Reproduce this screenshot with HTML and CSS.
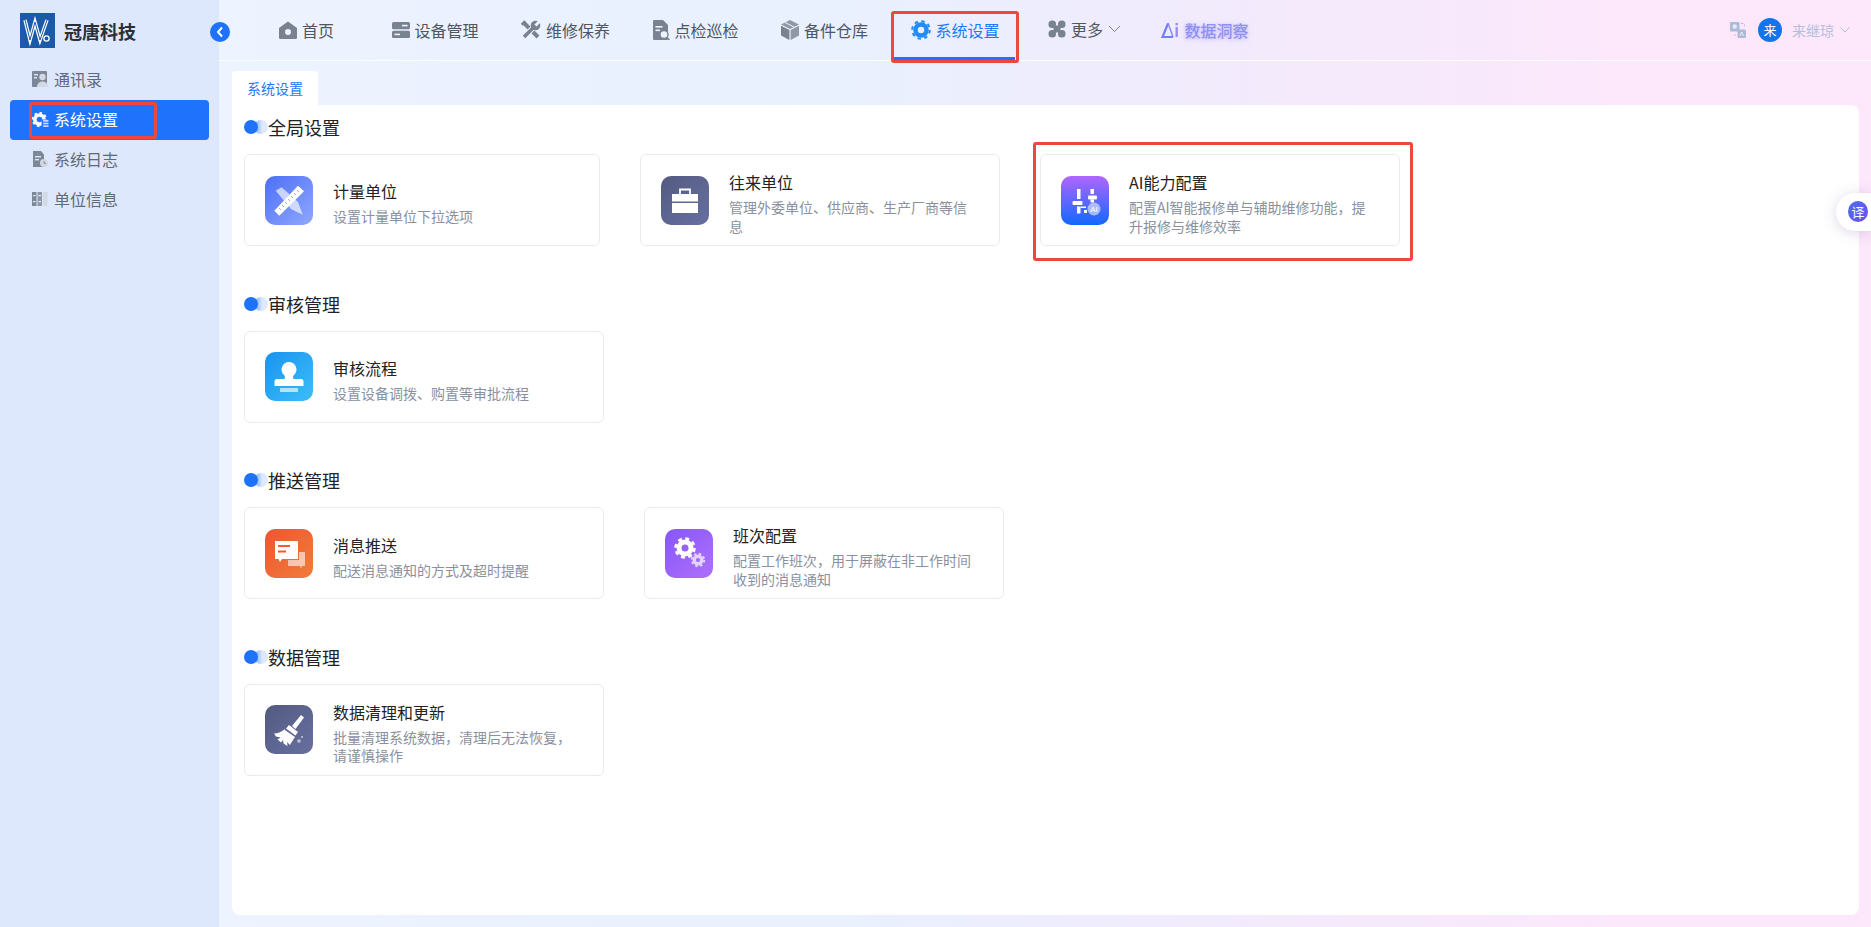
FILE: index.html
```html
<!DOCTYPE html>
<html>
<head>
    <title>系统设置</title>
    <link rel="stylesheet" href="styles.css">
</head>
<body>
    <aside class="sidebar">
        <div class="brand">
            <svg class="brand-logo" width="35" height="35" viewBox="0 0 35 35">
                <rect width="35" height="35" fill="#1b5aa8"/>
                <polyline points="5,7 10,27 15,9 20,27 27,7" fill="none" stroke="#fff" stroke-width="3.4"/>
                <polyline points="5,7 10,27 15,9 20,27 27,7" fill="none" stroke="#1b5aa8" stroke-width="1"/>
                <circle cx="26.5" cy="25.5" r="2.6" fill="none" stroke="#fff" stroke-width="1.3"/>
            </svg>
            <span class="brand-name">冠唐科技</span>
        </div>
        <button class="collapse-btn">
            <svg width="10" height="12" viewBox="0 0 10 12"><polyline points="7,1.5 3,6 7,10.5" fill="none" stroke="#fff" stroke-width="2"/></svg>
        </button>
        <a class="side-item">
            <svg width="16" height="16" viewBox="0 0 16 16">
                <rect x="0" y="0" width="15" height="16" rx="1" fill="#7c8797"/>
                <rect x="2" y="3" width="4" height="1.4" fill="#dfe8f8"/>
                <rect x="2" y="6" width="3" height="1.4" fill="#dfe8f8"/>
                <circle cx="10.5" cy="6" r="3.2" fill="#d3d9e3"/>
                <path d="M5 16c0-4 3-5.500 5.500-5.500S16 12 16 16z" fill="#d3d9e3"/>
            </svg>
            通讯录
        </a>
        <a class="side-item active">
            <svg width="17" height="17" viewBox="0 0 16 16">
                <circle cx="7" cy="8" r="4.300" fill="none" stroke="#fff" stroke-width="3.400"/>
                <circle cx="7" cy="8" r="6.400" fill="none" stroke="#fff" stroke-width="1.600" stroke-dasharray="2.400 2.600"/>
                <rect x="9" y="8" width="7" height="8" fill="#1f72fb"/>
                <rect x="10.500" y="8.500" width="5" height="1.500" fill="#cfe0ff"/>
                <rect x="10.500" y="11" width="5" height="1.500" fill="#cfe0ff"/>
                <rect x="10.500" y="13.500" width="5" height="1.500" fill="#cfe0ff"/>
            </svg>
            系统设置
            <span class="mark mark-side"></span>
        </a>
        <a class="side-item">
            <svg width="16" height="16" viewBox="0 0 16 16">
                <path d="M1 0h8l3 3.500V16H1z" fill="#7c8797"/>
                <rect x="3" y="5" width="6" height="1.400" fill="#dfe8f8"/>
                <rect x="3" y="8" width="4" height="1.400" fill="#dfe8f8"/>
                <circle cx="12" cy="12" r="4" fill="#d3d9e3"/>
                <path d="M12 10v2.300h2" fill="none" stroke="#7c8797" stroke-width=".9"/>
            </svg>
            系统日志
        </a>
        <a class="side-item">
            <svg width="16" height="16" viewBox="0 0 16 16">
                <rect x="0" y="1" width="4.500" height="14" fill="#7c8797"/>
                <rect x="5.500" y="1" width="4.500" height="14" fill="#8d97a6"/>
                <rect x="11" y="1" width="4.500" height="14" fill="#d3d9e3"/>
                <rect x="1" y="4" width="2.500" height="1.200" fill="#dfe8f8"/>
                <rect x="6.500" y="4" width="2.500" height="1.200" fill="#dfe8f8"/>
                <rect x="1" y="10" width="2.500" height="1.200" fill="#dfe8f8"/>
                <rect x="6.500" y="10" width="2.500" height="1.200" fill="#dfe8f8"/>
            </svg>
            单位信息
        </a>
    </aside>

    <div class="main">
        <header class="topbar">
            <nav class="nav">
                <a class="nav-item nav-home">
                    <svg width="18" height="18" viewBox="0 0 18 18"><path d="M9 .5 18 7v9.500a1.500 1.500 0 0 1-1.500 1.500h-15A1.500 1.500 0 0 1 0 16.500V7z" fill="#79838f"/><circle cx="9" cy="11" r="3" fill="#eef3fe"/></svg>
                    首页
                </a>
                <a class="nav-item">
                    <svg width="18" height="18" viewBox="0 0 18 18"><rect y="1" width="18" height="7.200" rx="1.500" fill="#79838f"/><rect y="9.800" width="18" height="7.200" rx="1.500" fill="#79838f"/><rect x="10" y="3.800" width="5.500" height="1.600" fill="#eef3fe"/><rect x="2.500" y="12.600" width="5.500" height="1.600" fill="#eef3fe"/></svg>
                    设备管理
                </a>
                <a class="nav-item">
                    <svg width="20" height="20" viewBox="0 0 20 20">
                        <path d="M3 3 17 17" stroke="#79838f" stroke-width="4"/>
                        <rect x="0" y="1.500" width="5" height="3" transform="rotate(-45 2.500 3)" fill="#79838f"/>
                        <path d="M3 17 13 7" stroke="#eef3fe" stroke-width="5.500"/>
                        <path d="M3 17 13 7" stroke="#79838f" stroke-width="3.600"/>
                        <circle cx="14.500" cy="5.500" r="4.800" fill="#79838f"/>
                        <path d="M14.500 5.500 19 1" stroke="#eef3fe" stroke-width="3"/>
                    </svg>
                    维修保养
                </a>
                <a class="nav-item">
                    <svg width="17" height="20" viewBox="0 0 17 20"><path d="M1 0h9l5 5v14a1 1 0 0 1-1 1H1a1 1 0 0 1-1-1V1a1 1 0 0 1 1-1z" fill="#79838f"/><rect x="2.500" y="6" width="7" height="1.600" fill="#eef3fe"/><rect x="2.500" y="9.500" width="4.500" height="1.600" fill="#eef3fe"/><circle cx="11" cy="14.500" r="4" fill="#eef3fe" stroke="#79838f" stroke-width="1.400"/><path d="m14 17.500 2.500 2.500" stroke="#79838f" stroke-width="1.500"/></svg>
                    点检巡检
                </a>
                <a class="nav-item">
                    <svg width="18" height="20" viewBox="0 0 18 20"><path d="M9 0 18 4.500 9 9 0 4.500z" fill="#8f98a3"/><path d="M0 5.800 8.400 10v10L0 15.500z" fill="#79838f"/><path d="M18 5.800 9.600 10v10l8.400-4.500z" fill="#8f98a3"/><path d="m4 2.500 9 4.500" stroke="#eef3fe" stroke-width="1"/></svg>
                    备件仓库
                </a>
                <a class="nav-item active">
                    <svg width="20" height="20" viewBox="0 0 20 20"><circle cx="10" cy="10" r="5.500" fill="none" stroke="#1f8df5" stroke-width="4.500"/><circle cx="10" cy="10" r="8.800" fill="none" stroke="#1f8df5" stroke-width="2" stroke-dasharray="3.500 3.410"/></svg>
                    系统设置
                    <span class="mark mark-nav"></span>
                </a>
                <a class="nav-item nav-more">
                    <svg class="nudge-up" width="18" height="18" viewBox="0 0 18 18" fill="#79838f"><rect x=".5" y=".5" width="7.500" height="7.500" rx="3.500"/><rect x="10" y=".5" width="7.500" height="7.500" rx="3.500"/><rect x=".5" y="10" width="7.500" height="7.500" rx="3.500"/><rect x="10" y="10" width="7.500" height="7.500" rx="3.500"/><rect x="5.500" y="5.500" width="7" height="7"/></svg>
                    <span class="nudge-up">更多</span>
                    <svg class="nudge-up" width="13" height="8" viewBox="0 0 13 8"><polyline points="1,1 6.500,6.500 12,1" fill="none" stroke="#79838f" stroke-width="1"/></svg>
                </a>
                <a class="nav-item nav-insight">
                    <svg width="18" height="18" viewBox="0 0 18 18">
                        <path d="M7 2.500 1.500 16H12" fill="none" stroke="#6f7ff5" stroke-width="2.200"/>
                        <path d="M7 2 12 16" fill="none" stroke="#7f82f5" stroke-width="1.300"/>
                        <rect x="14.500" y="6" width="2.400" height="10" fill="#9a8cf8"/>
                        <rect x="14.500" y="2" width="2.400" height="2.400" fill="#9a8cf8"/>
                    </svg>
                    数据洞察
                </a>
            </nav>
            <div class="user-box">
                <svg width="16" height="16" viewBox="0 0 16 16">
                    <rect width="9.500" height="9.500" rx="1" fill="#aebbd6"/>
                    <circle cx="4.750" cy="4.500" r="2.200" fill="#e6ebf6"/>
                    <path d="M11 1.500h2.500a1 1 0 0 1 1 1V5M5 12v1.500a1 1 0 0 0 1 1" fill="none" stroke="#aebbd6" stroke-width="1" stroke-dasharray="2 1"/>
                    <rect x="7.500" y="7.500" width="8.500" height="8.500" rx="1" fill="#aebbd6"/>
                    <path d="m10 14 1.750-4 1.750 4" fill="none" stroke="#f3e9f8" stroke-width="1"/>
                </svg>
                <span class="avatar">来</span>
                <span class="user-name">来继琼</span>
                <svg width="10" height="6" viewBox="0 0 10 6"><polyline points=".5,.5 5,5 9.500,.5" fill="none" stroke="#b4c0da" stroke-width="1"/></svg>
            </div>
        </header>

        <div class="tab-row">
            <span class="tab">系统设置</span>
        </div>

        <div class="panel">
            <section class="group">
                <h3 class="group-title"><i class="dot"></i><i class="dot-fade"></i>全局设置</h3>
                <div class="card-row">
                    <div class="card card-first">
                        <div class="card-icon bg-ruler">
                            <svg width="48" height="48" viewBox="0 0 48 48">
                                <path d="M10.700 14.700 16.700 11.300 33 26 37.700 38.700 26 33z" fill="#fff" fill-opacity=".65"/>
                                <path d="M9.300 34.700 33 9.700 39 15.300 14.300 39.700z" fill="#fff"/>
                                <path d="M14 32l2 2M17 29l2 2M20 26l2 2M23 23l2 2M26 20l2 2M29 17l2 2M32 14l2 2" stroke="#7f97fb" stroke-width=".8"/>
                            </svg>
                        </div>
                        <div class="card-text">
                            <div class="card-title">计量单位</div>
                            <div class="card-desc">设置计量单位下拉选项</div>
                        </div>
                    </div>
                    <div class="card">
                        <div class="card-icon bg-slate">
                            <svg width="28" height="28" viewBox="0 0 28 28">
                                <path d="M9 8V3.500h10V8" fill="none" stroke="#fff" stroke-width="1.800"/>
                                <rect x="1" y="8" width="26" height="7.500" fill="#fff"/>
                                <rect x="1" y="17" width="26" height="10" fill="#fff"/>
                            </svg>
                        </div>
                        <div class="card-text">
                            <div class="card-title">往来单位</div>
                            <div class="card-desc">管理外委单位、供应商、生产厂商等信息</div>
                        </div>
                    </div>
                    <div class="card card-marked">
                        <div class="card-icon bg-ai">
                            <svg width="32" height="32" viewBox="0 0 32 32">
                                <g fill="#fff">
                                    <rect x="8" y="5" width="3.500" height="10"/>
                                    <rect x="3.500" y="17" width="10" height="4" rx="1"/>
                                    <rect x="8" y="22.500" width="3.500" height="7"/>
                                    <rect x="21.500" y="5" width="3.500" height="5"/>
                                    <rect x="19" y="11.500" width="9" height="4" rx="1"/>
                                    <rect x="21.500" y="15.500" width="3.500" height="3"/>
                                    <rect x="15" y="26" width="3" height="3"/>
                                    <rect x="11.500" y="22.500" width="5.500" height="1.500"/>
                                </g>
                                <circle cx="25" cy="25" r="6.500" fill="#fff" fill-opacity=".55"/>
                                <text class="ai-mini" x="25" y="28" text-anchor="middle">AI</text>
                            </svg>
                        </div>
                        <div class="card-text">
                            <div class="card-title">AI能力配置</div>
                            <div class="card-desc">配置AI智能报修单与辅助维修功能，提升报修与维修效率</div>
                        </div>
                        <span class="mark mark-card"></span>
                    </div>
                </div>
            </section>

            <section class="group">
                <h3 class="group-title"><i class="dot"></i><i class="dot-fade"></i>审核管理</h3>
                <div class="card-row">
                    <div class="card">
                        <div class="card-icon bg-sky">
                            <svg width="32" height="36" viewBox="0 0 32 36">
                                <path d="M16 3a7.500 7.500 0 0 1 5 13c-1.500 1.500-1 4 0 4h7a2.500 2.500 0 0 1 2.500 2.500V27H1.500v-4.500A2.500 2.500 0 0 1 4 20h7c1 0 1.500-2.500 0-4A7.500 7.500 0 0 1 16 3z" fill="#fff"/>
                                <rect x="7" y="29" width="18" height="4" fill="#fff" fill-opacity=".65"/>
                            </svg>
                        </div>
                        <div class="card-text">
                            <div class="card-title">审核流程</div>
                            <div class="card-desc">设置设备调拨、购置等审批流程</div>
                        </div>
                    </div>
                </div>
            </section>

            <section class="group">
                <h3 class="group-title"><i class="dot"></i><i class="dot-fade"></i>推送管理</h3>
                <div class="card-row">
                    <div class="card">
                        <div class="card-icon bg-orange">
                            <svg width="48" height="48" viewBox="0 0 48 48">
                                <path d="M34 23h6v14h-3l-1 2.500-1-2.500H23v-6h11z" fill="#fff" fill-opacity=".6"/>
                                <path d="M10 12h23v18H17l-2 3-1.500-3H10z" fill="#fff"/>
                                <rect x="13" y="16" width="12" height="2" fill="#ee5d34"/>
                                <rect x="13" y="21.500" width="8" height="2" fill="#ee5d34"/>
                            </svg>
                        </div>
                        <div class="card-text">
                            <div class="card-title">消息推送</div>
                            <div class="card-desc">配送消息通知的方式及超时提醒</div>
                        </div>
                    </div>
                    <div class="card">
                        <div class="card-icon bg-violet">
                            <svg width="36" height="36" viewBox="0 0 36 36">
                                <circle cx="14" cy="13" r="6" fill="none" stroke="#fff" stroke-width="5"/>
                                <circle cx="14" cy="13" r="9.500" fill="none" stroke="#fff" stroke-width="2.500" stroke-dasharray="4 3.460"/>
                                <circle cx="27" cy="25" r="3.800" fill="none" stroke="#fff" stroke-opacity=".7" stroke-width="3.400"/>
                                <circle cx="27" cy="25" r="6.300" fill="none" stroke="#fff" stroke-opacity=".7" stroke-width="1.800" stroke-dasharray="2.600 2.350"/>
                            </svg>
                        </div>
                        <div class="card-text">
                            <div class="card-title">班次配置</div>
                            <div class="card-desc">配置工作班次，用于屏蔽在非工作时间收到的消息通知</div>
                        </div>
                    </div>
                </div>
            </section>

            <section class="group">
                <h3 class="group-title"><i class="dot"></i><i class="dot-fade"></i>数据管理</h3>
                <div class="card-row">
                    <div class="card">
                        <div class="card-icon bg-slate">
                            <svg width="34" height="34" viewBox="0 0 34 34">
                                <path d="M20 13 29 2l3 2.500-8.500 11.500z" fill="#fff"/>
                                <path d="M17 12l9 7-2.500 3.500-9.500-7z" fill="#fff"/>
                                <path d="M13 17l10 7c-2 3-4 6-5 8l-3-3 .5 4-4-2.500-.5-3.500-2 2.500-3.500-3 3-2-4.500-1-2-3c4 0 8-2 11-4.500z" fill="#fff"/>
                                <circle cx="27" cy="28" r="1.800" fill="#fff" fill-opacity=".6"/>
                                <circle cx="30" cy="24" r="1.100" fill="#fff" fill-opacity=".6"/>
                            </svg>
                        </div>
                        <div class="card-text">
                            <div class="card-title">数据清理和更新</div>
                            <div class="card-desc">批量清理系统数据，清理后无法恢复，请谨慎操作</div>
                        </div>
                    </div>
                </div>
            </section>
        </div>
    </div>

    <div class="float-tool">
        <span class="float-badge">译</span>
    </div>
</body>
</html>
```

FILE: styles.css
```css
:root {
    --primary: #1f72fb;
    --nav-text: #4f5763;
    --side-bg: #dde8fd;
    --title: #222;
    --desc: #8a919e;
    --border: #e9ebef;
    --mark: #ec483d;
}

* {
    box-sizing: border-box;
}

body {
    margin: 0;
    height: 100vh;
    overflow: hidden;
    display: flex;
    background: linear-gradient(90deg, #eef4ff 0, #e9f0fe 45%, #f3eafc 68%, #fde7fb 88%);
    font-family: "Noto Sans CJK SC", "Noto Sans", sans-serif;
    color: var(--title);
}

/* Sidebar */
.sidebar {
    width: 219px;
    flex: none;
    position: relative;
    background: var(--side-bg);
}

.brand {
    height: 60px;
    padding: 13px 0 0 20px;
    display: flex;
    align-items: flex-start;
    gap: 9px;
}

.brand-name {
    font-size: 18px;
    font-weight: 700;
    line-height: 36px;
    color: #2b2f36;
}

.collapse-btn {
    position: absolute;
    top: 22px;
    left: 210px;
    width: 20px;
    height: 20px;
    padding: 0;
    border: none;
    border-radius: 50%;
    background: var(--primary);
    display: flex;
    align-items: center;
    justify-content: center;
}

.side-item {
    position: relative;
    height: 40px;
    margin: 0 10px;
    padding: 0 0 2px 22px;
    display: flex;
    align-items: center;
    gap: 6px;
    font-size: 16px;
    color: #626a76;
    border-radius: 4px;
}

.side-item.active {
    background: var(--primary);
    color: #fff;
    gap: 5px;
}

/* Top bar */
.main {
    flex: 1;
    min-width: 0;
    display: flex;
    flex-direction: column;
}

.topbar {
    height: 61px;
    flex: none;
    display: flex;
    align-items: stretch;
    border-bottom: 1px solid #fff;
}

.nav {
    display: flex;
    margin-left: 43px;
    gap: 10.5px;
}

.nav-item {
    position: relative;
    height: 60px;
    padding: 0 15px 0 17px;
    display: flex;
    align-items: center;
    gap: 5px;
    font-size: 16px;
    color: var(--nav-text);
    white-space: nowrap;
}

.nav-home {
    margin-right: 15px;
}

.nav-item.active {
    color: #1f78fa;
    box-shadow: inset 0 -3px 0 var(--primary);
}

.nav-more {
    margin-left: 6px;
}

.nudge-up {
    margin-bottom: 3px;
}

.nav-insight {
    margin-left: -3px;
    gap: 6px;
    font-weight: 500;
    color: #8f90f3;
    text-shadow: 0 1px 4px rgba(130, 130, 245, .5);
}

.user-box {
    margin-left: auto;
    padding-right: 21px;
    display: flex;
    align-items: center;
    font-size: 14px;
    color: #b4c0da;
}

.avatar {
    width: 24px;
    height: 24px;
    margin: 0 10px 0 12px;
    border-radius: 50%;
    background: #1673ee;
    color: #fff;
    font-size: 13px;
    line-height: 24px;
    text-align: center;
}

.user-name {
    margin-right: 6px;
}

/* Tab and panel */
.tab-row {
    margin: 10px 12px 0 13px;
    display: flex;
}

.tab {
    width: 86px;
    height: 34px;
    background: #fff;
    border-radius: 4px 4px 0 0;
    font-size: 14px;
    line-height: 34px;
    text-align: center;
    color: #1f78fa;
}

.panel {
    flex: 1;
    margin: 0 12px 12px 13px;
    padding: 9px 12px 0;
    background: #fff;
    border-radius: 0 8px 8px 8px;
}

.group {
    margin-bottom: 44.67px;
}

.group-title {
    margin: 0 0 14px;
    height: 26px;
    display: flex;
    align-items: center;
    font-size: 18px;
    font-weight: 400;
    line-height: 26px;
}

.dot,
.dot-fade {
    width: 14px;
    height: 14px;
    border-radius: 50%;
}

.dot {
    position: relative;
    z-index: 1;
    background: var(--primary);
}

.dot-fade {
    margin-left: -4px;
    background: linear-gradient(90deg, #6ea6fd, #dfe9fe 60%);
}

.card-row {
    display: flex;
    gap: 40px;
}

.card {
    position: relative;
    width: 360px;
    height: 92px;
    padding: 0 0 0 20px;
    display: flex;
    align-items: center;
    gap: 20px;
    background: #fff;
    border: 1px solid var(--border);
    border-radius: 6px;
}

.card-first {
    width: 356px;
}

.card-icon {
    width: 48px;
    height: 49px;
    flex: none;
    border-radius: 10px;
    display: flex;
    align-items: center;
    justify-content: center;
}

.bg-ruler {
    background: linear-gradient(135deg, #4c6ff5, #90a8ff);
}

.bg-slate {
    background: linear-gradient(135deg, #535b82, #676fa0);
}

.bg-ai {
    background: linear-gradient(180deg, #b066ff, #1268ff);
}

.bg-sky {
    background: linear-gradient(135deg, #1a92f0, #3cbef8);
}

.bg-orange {
    background: linear-gradient(135deg, #ec5632, #f27c39);
}

.bg-violet {
    background: linear-gradient(135deg, #8757f8, #ae70fb);
}

.ai-mini {
    font-family: "Liberation Sans", sans-serif;
    font-size: 8px;
    fill: #fff;
}

.card-text {
    width: 245px;
    padding-top: 6px;
}

.card-title {
    font-size: 16px;
    line-height: 22px;
    margin-bottom: 5px;
    color: var(--title);
}

.card-desc {
    font-size: 14px;
    line-height: 18.5px;
    color: var(--desc);
}

/* Red annotation boxes from the screenshot */
.mark {
    position: absolute;
    border: 3px solid var(--mark);
    border-radius: 3px;
    pointer-events: none;
}

.mark-side {
    top: 2px;
    bottom: 1px;
    left: 19px;
    right: 52px;
}

.mark-nav {
    top: 11px;
    bottom: -3px;
    left: -3px;
    right: -4px;
}

.mark-card {
    top: -13px;
    bottom: -16px;
    left: -8px;
    right: -14px;
}

/* Floating translate widget */
.float-tool {
    position: absolute;
    top: 193px;
    right: 0;
    width: 35px;
    height: 38px;
    padding: 8px 0 0 12px;
    background: #fff;
    border-radius: 19px 0 0 19px;
    box-shadow: 0 2px 14px rgba(120, 90, 160, .25);
}

.float-badge {
    display: block;
    width: 20px;
    height: 21px;
    border-radius: 50%;
    background: linear-gradient(135deg, #4f6cf7, #6a4ff0);
    color: #fff;
    font-size: 13px;
    line-height: 21px;
    text-align: center;
}
```
